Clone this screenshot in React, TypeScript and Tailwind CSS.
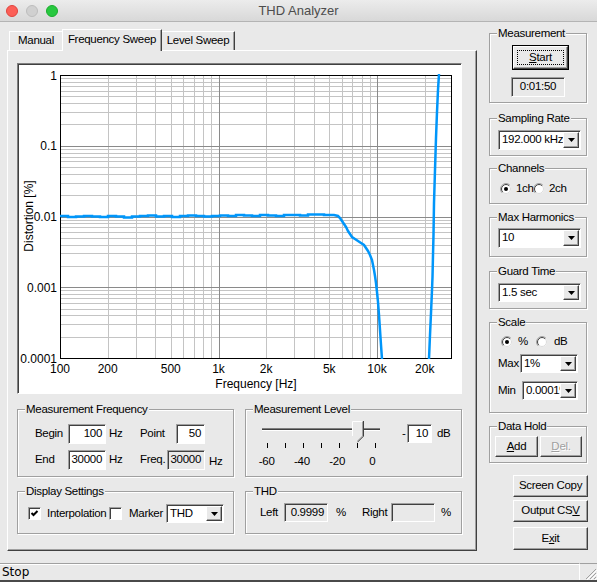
import React from "react";

const UI_FONT = '"Liberation Sans", Arial, sans-serif';
const CHART_FONT = '"Liberation Sans", Arial, sans-serif';

// plot area in page coordinates
const X0 = 60;
const X1 = 452;
const Y0 = 75;
const Y1 = 358;
const DX = 158.5;
const DY = (Y1 - Y0) / 4;
const fx = (f: number) => X0 + DX * Math.log10(f / 100);
const vy = (v: number) => Y0 - DY * Math.log10(v);

const FLAT_Y = [
  216, 217, 216.5, 216, 216.5, 217, 216, 216.5, 217.5, 216.5, 216, 215.5, 216.5, 216, 217, 216, 215.5,
  216, 216.5, 216, 215.5, 216, 215, 215.5, 216, 215, 215.5, 216, 215, 215, 215.5, 214.5, 214.5, 215,
];

const DROP: [number, number][] = [
  [334, 215], [338, 216], [340, 218], [342, 221], [344, 224], [346, 227], [348, 231], [350, 234],
  [352, 237], [355, 239], [358, 241], [361, 243], [364, 245], [366, 248], [368, 251], [370, 255],
  [372, 260], [373, 265], [374, 270], [375, 276], [376, 283], [377, 292], [378, 302], [379, 315],
  [380, 330], [381, 345], [382, 359],
];

const RISE: [number, number][] = [
  [429, 359], [430, 335], [431, 313], [432, 290], [432.5, 277], [433, 255], [433.5, 235], [434, 203],
  [435, 170], [436, 138], [437, 112], [438, 90], [439, 74],
];

function Chart() {
  const vlines: { x: number; major: boolean }[] = [];
  for (const d of [100, 1000, 10000]) {
    for (let k = 1; k <= 9; k++) {
      const f = k * d;
      if (f <= 100 || f >= 30000) continue;
      vlines.push({ x: Math.round(fx(f)) + 0.5, major: k === 1 });
    }
  }
  const hlines: { y: number; major: boolean }[] = [];
  for (const d of [0.0001, 0.001, 0.01, 0.1]) {
    for (let k = 1; k <= 9; k++) {
      const v = k * d;
      if (k === 1 && d === 0.0001) continue;
      hlines.push({ y: Math.round(vy(v)) + 0.5, major: k === 1 });
    }
  }

  const flat: string[] = [];
  FLAT_Y.forEach((y, i) => {
    const x = X0 + i * 8;
    flat.push(`${x},${y}`, `${x + 8},${y}`);
  });
  const curve1 = [...flat, ...DROP.map(([x, y]) => `${x},${y}`)].join(" ");
  const curve2 = RISE.map(([x, y]) => `${x},${y}`).join(" ");

  const xlabels: [number, string][] = [
    [100, "100"], [200, "200"], [500, "500"], [1000, "1k"], [2000, "2k"], [5000, "5k"], [10000, "10k"], [20000, "20k"],
  ];
  const ylabels: [number, string][] = [
    [1, "1"], [0.1, "0.1"], [0.01, "0.01"], [0.001, "0.001"], [0.0001, "0.0001"],
  ];

  return (
    <svg width="443" height="329" viewBox="18 64 443 329" style={{ fontFamily: CHART_FONT, letterSpacing: 0 }}>
      <defs>
        <clipPath id="plot">
          <rect x={X0} y={Y0 - 1} width={X1 - X0} height={Y1 - Y0 + 2} />
        </clipPath>
      </defs>
      <g shapeRendering="crispEdges">
        {vlines.filter((l) => !l.major).map((l) => (
          <line key={`v${l.x}`} x1={l.x} x2={l.x} y1={Y0} y2={Y1} stroke="#c4c4c4" />
        ))}
        {hlines.filter((l) => !l.major).map((l) => (
          <line key={`h${l.y}`} x1={X0} x2={X1} y1={l.y} y2={l.y} stroke="#c4c4c4" />
        ))}
        {vlines.filter((l) => l.major).map((l) => (
          <line key={`V${l.x}`} x1={l.x} x2={l.x} y1={Y0} y2={Y1} stroke="#8a8a8a" />
        ))}
        {hlines.filter((l) => l.major).map((l) => (
          <line key={`H${l.y}`} x1={X0} x2={X1} y1={l.y} y2={l.y} stroke="#8a8a8a" />
        ))}
        <rect x={X0 + 0.5} y={Y0 + 0.5} width={X1 - X0 - 1} height={Y1 - Y0} fill="none" stroke="#000" />
      </g>
      <g clipPath="url(#plot)" fill="none" stroke="#0096fa" strokeWidth="2.5" strokeLinejoin="miter">
        <polyline points={curve1} />
        <polyline points={curve2} />
      </g>
      {ylabels.map(([v, t]) => (
        <text key={t} x={57} y={vy(v) + 4.5} fontSize="12" textAnchor="end" fill="#000">
          {t}
        </text>
      ))}
      {xlabels.map(([f, t]) => (
        <text key={t} x={fx(f)} y={373} fontSize="12" textAnchor="middle" fill="#000">
          {t}
        </text>
      ))}
      <text x={256} y={388} fontSize="12" textAnchor="middle" fill="#000">
        Frequency [Hz]
      </text>
      <text x={33} y={216} fontSize="12" textAnchor="middle" fill="#000" transform="rotate(-90 33 216)">
        Distortion [%]
      </text>
    </svg>
  );
}

function Group({ label, className, children }: { label: string; className: string; children?: React.ReactNode }) {
  return (
    <div className={`relative border border-[#a0a0a0] shadow-[inset_1px_1px_0_#fff,1px_1px_0_#fff] ${className}`}>
      <span className="absolute -top-[7px] left-[7px] bg-[#e9e9e9] px-[1px] leading-[13px] whitespace-nowrap">
        {label}
      </span>
      {children}
    </div>
  );
}

function Field({ value, className, disabled }: { value: string; className: string; disabled?: boolean }) {
  return (
    <div
      className={`flex items-center justify-end pr-[3px] border border-t-[#a0a0a0] border-l-[#a0a0a0] border-r-white border-b-white shadow-[inset_1px_1px_0_#404040] leading-none ${
        disabled ? "bg-[#e9e9e9]" : "bg-white"
      } ${className}`}
    >
      {value}
    </div>
  );
}

function Arrow() {
  return (
    <svg width="7" height="4" viewBox="0 0 7 4">
      <path d="M0 0 H7 L3.5 4 Z" fill="#000" />
    </svg>
  );
}

function Combo({ value, className }: { value: string; className: string }) {
  return (
    <div
      className={`flex items-stretch p-[1px] bg-white border border-t-[#a0a0a0] border-l-[#a0a0a0] border-r-white border-b-white shadow-[inset_1px_1px_0_#404040] ${className}`}
    >
      <span className="flex-1 min-w-0 overflow-hidden flex items-center pl-[2px] leading-none">{value}</span>
      <span className="w-[16px] shrink-0 flex items-center justify-center bg-[#e9e9e9] border border-t-white border-l-white border-r-[#404040] border-b-[#404040] shadow-[inset_-1px_-1px_0_#a0a0a0]">
        <Arrow />
      </span>
    </div>
  );
}

function Btn({ children, className }: { children: React.ReactNode; className: string }) {
  return (
    <div
      className={`flex items-center justify-center bg-[#e9e9e9] border border-t-white border-l-white border-r-[#404040] border-b-[#404040] shadow-[inset_-1px_-1px_0_#a0a0a0] leading-none ${className}`}
    >
      {children}
    </div>
  );
}

function Check({ checked }: { checked?: boolean }) {
  return (
    <div className="w-[13px] h-[13px] shrink-0 bg-white border border-t-[#a0a0a0] border-l-[#a0a0a0] border-r-white border-b-white shadow-[inset_1px_1px_0_#404040] flex items-center justify-center">
      {checked && (
        <svg width="9" height="9" viewBox="0 0 9 9">
          <path d="M1.5 4 L3.5 6 L7.5 2" stroke="#000" strokeWidth="2" fill="none" />
        </svg>
      )}
    </div>
  );
}

function Radio({ checked }: { checked?: boolean }) {
  const a = (r: number) => 6 - r * 0.7071;
  const b = (r: number) => 6 + r * 0.7071;
  return (
    <svg width="12" height="12" viewBox="0 0 12 12" className="shrink-0">
      <circle cx="6" cy="6" r="5" fill="#fff" />
      <path d={`M${a(5.5)} ${b(5.5)} A5.5 5.5 0 0 1 ${b(5.5)} ${a(5.5)}`} stroke="#a0a0a0" fill="none" />
      <path d={`M${a(4.5)} ${b(4.5)} A4.5 4.5 0 0 1 ${b(4.5)} ${a(4.5)}`} stroke="#404040" fill="none" />
      <path d={`M${b(4.5)} ${a(4.5)} A4.5 4.5 0 0 1 ${a(4.5)} ${b(4.5)}`} stroke="#dcdcdc" fill="none" />
      {checked && <circle cx="6" cy="6" r="2" fill="#000" />}
    </svg>
  );
}

function Slider() {
  const ticks = [11.3, 29.3, 47.3, 65.3, 83.3, 101.3, 119.3];
  return (
    <svg width="134" height="34" viewBox="0 0 134 34" shapeRendering="crispEdges">
      <line x1="6" x2="124" y1="10.5" y2="10.5" stroke="#808080" />
      <line x1="6" x2="124" y1="11.5" y2="11.5" stroke="#404040" />
      <line x1="6" x2="124" y1="12.5" y2="12.5" stroke="#fff" />
      {ticks.map((x) => (
        <line key={x} x1={Math.round(x) + 0.5} x2={Math.round(x) + 0.5} y1="25" y2="30" stroke="#000" />
      ))}
      <g shapeRendering="auto">
        <path d="M96 3 H107 V18 L101.5 23.5 L96 18 Z" fill="#e9e9e9" />
        <path d="M96.5 18 V3.5 H107" stroke="#fff" fill="none" />
        <path d="M106.5 3.5 V18 L101.5 23" stroke="#a0a0a0" fill="none" />
        <path d="M107.5 3 V18.2 L101.5 24.2" stroke="#404040" fill="none" />
      </g>
    </svg>
  );
}

export default function App() {
  return (
    <div
      className="w-[597px] h-[582px] flex flex-col overflow-hidden bg-[#e9e9e9] text-[11.5px] tracking-[-0.3px] text-black whitespace-nowrap"
      style={{ fontFamily: UI_FONT }}
    >
      {/* title bar */}
      <div className="h-[22px] shrink-0 flex items-center bg-gradient-to-b from-[#ececec] to-[#d8d8d8] border-b border-[#b4b4b4]">
        <div className="w-[64px] flex items-center gap-[8px] pl-[6px]">
          <span className="w-[12px] h-[12px] rounded-full bg-[#fc5f57] border border-[#e0443e]" />
          <span className="w-[12px] h-[12px] rounded-full bg-[#d0d0d0] border border-[#bdbdbd]" />
          <span className="w-[12px] h-[12px] rounded-full bg-[#28c840] border border-[#1aad2c]" />
        </div>
        <div className="flex-1 text-center text-[13px] tracking-normal text-[#4d4d4d] leading-none">THD Analyzer</div>
        <div className="w-[64px]" />
      </div>

      {/* body */}
      <div className="h-[541px] shrink-0 flex">
        {/* left: tabs */}
        <div className="w-[480px] pl-[7px] flex flex-col">
          <div className="h-[21px] mt-[7px] pl-[2px] flex items-end">
            <div className="w-[53px] h-[19px] border-t border-l border-white flex items-center justify-center leading-none">
              Manual
            </div>
            <div className="relative z-10 w-[100px] h-[22px] -mb-[1px] bg-[#e9e9e9] border-t border-l border-white border-r border-r-[#404040] shadow-[inset_-1px_0_0_#a0a0a0] flex items-center justify-center pb-[2px] leading-none">
              Frequency Sweep
            </div>
            <div className="w-[73px] h-[19px] border-t border-white border-r border-r-[#404040] shadow-[inset_-1px_0_0_#a0a0a0] flex items-center justify-center leading-none">
              Level Sweep
            </div>
          </div>

          <div className="w-[470px] h-[501px] border border-t-white border-l-white border-r-[#404040] border-b-[#404040] shadow-[inset_-1px_-1px_0_#a0a0a0] pl-[9px] pt-[12px] flex flex-col">
            <div className="w-[445px] h-[331px] bg-white border border-t-[#808080] border-l-[#808080] border-r-white border-b-white shadow-[inset_1px_1px_0_#404040]">
              <Chart />
            </div>

            <div className="flex gap-[11px] mt-[15px]">
              <Group label="Measurement Frequency" className="w-[217px] h-[68px] pl-[17px] pt-[14px]">
                <div className="flex items-center h-[20px]">
                  <span className="w-[33px]">Begin</span>
                  <Field value="100" className="w-[38px] h-[20px]" />
                  <span className="w-[31px] ml-[3px]">Hz</span>
                  <span className="w-[36px]">Point</span>
                  <Field value="50" className="w-[29px] h-[20px]" />
                </div>
                <div className="flex items-center h-[20px] mt-[6px]">
                  <span className="w-[33px]">End</span>
                  <Field value="30000" className="w-[38px] h-[20px]" />
                  <span className="w-[31px] ml-[3px]">Hz</span>
                  <span className="w-[27px]">Freq.</span>
                  <Field value="30000" className="w-[38px] h-[20px]" disabled />
                  <span className="ml-[4px] mt-[3px]">Hz</span>
                </div>
              </Group>

              <Group label="Measurement Level" className="w-[217px] h-[68px] pl-[10px] pt-[8px] flex">
                <div className="w-[134px] flex flex-col">
                  <Slider />
                  <div className="flex -ml-[7px] mt-[2px] leading-[14px]">
                    <span className="w-[36px] text-center">-60</span>
                    <span className="w-[36px] text-center">-40</span>
                    <span className="w-[36px] text-center">-20</span>
                    <span className="w-[36px] text-center">0</span>
                  </div>
                </div>
                <div className="flex items-center self-start mt-[6px] ml-[12px]">
                  <span className="w-[5px]">-</span>
                  <Field value="10" className="w-[25px] h-[19px]" />
                  <span className="ml-[5px]">dB</span>
                </div>
              </Group>
            </div>

            <div className="flex gap-[11px] mt-[14px]">
              <Group label="Display Settings" className="w-[217px] h-[43px] pl-[10px] pt-[12px]">
                <div className="flex items-center h-[19px]">
                  <Check checked />
                  <span className="ml-[6px] w-[62px]">Interpolation</span>
                  <Check />
                  <span className="ml-[7px] w-[37px]">Marker</span>
                  <Combo value="THD" className="w-[58px] h-[19px]" />
                </div>
              </Group>

              <Group label="THD" className="w-[217px] h-[43px] pl-[14px] pt-[11px]">
                <div className="flex items-center h-[19px]">
                  <span className="w-[24px]">Left</span>
                  <Field value="0.9999" className="w-[44px] h-[19px]" disabled />
                  <span className="ml-[8px] w-[26px]">%</span>
                  <span className="w-[29px]">Right</span>
                  <Field value="" className="w-[44px] h-[19px]" disabled />
                  <span className="ml-[6px]">%</span>
                </div>
              </Group>
            </div>
          </div>
        </div>

        {/* right column */}
        <div className="w-[117px] pl-[9px] flex flex-col">
          <Group label="Measurement" className="w-[98px] h-[70px] mt-[11px] pl-[22px] pt-[11px]">
            <div className="w-[57px] h-[25px] border border-black">
              <Btn className="w-full h-full p-[3px]">
                <span className="w-full h-full flex items-center justify-center border border-dotted border-black leading-none">
                  <span>
                    <span className="underline">S</span>tart
                  </span>
                </span>
              </Btn>
            </div>
            <div className="-ml-[1px] mt-[7px] w-[54px] h-[20px] flex items-center justify-center border border-t-[#a0a0a0] border-l-[#a0a0a0] border-r-white border-b-white shadow-[inset_1px_1px_0_#404040] leading-none">
              0:01:50
            </div>
          </Group>

          <Group label="Sampling Rate" className="w-[98px] h-[38px] mt-[15px] pl-[8px] pt-[11px]">
            <Combo value="192.000 kHz" className="w-[83px] h-[20px]" />
          </Group>

          <Group label="Channels" className="w-[98px] h-[36px] mt-[12px] pl-[10px] pt-[14px]">
            <div className="flex items-center h-[12px]">
              <Radio checked />
              <span className="ml-[4px] w-[17px]">1ch</span>
              <Radio />
              <span className="ml-[4px]">2ch</span>
            </div>
          </Group>

          <Group label="Max Harmonics" className="w-[98px] h-[40px] mt-[13px] pl-[8px] pt-[10px]">
            <Combo value="10" className="w-[83px] h-[20px]" />
          </Group>

          <Group label="Guard Time" className="w-[98px] h-[38px] mt-[14px] pl-[8px] pt-[11px]">
            <Combo value="1.5 sec" className="w-[83px] h-[19px]" />
          </Group>

          <Group label="Scale" className="w-[98px] h-[91px] mt-[13px] pl-[8px] pt-[13px]">
            <div className="flex items-center h-[12px] pl-[3px]">
              <Radio checked />
              <span className="ml-[5px] w-[18px]">%</span>
              <Radio />
              <span className="ml-[6px]">dB</span>
            </div>
            <div className="flex items-center mt-[6px]">
              <span className="w-[22px]">Max</span>
              <Combo value="1%" className="w-[58px] h-[19px]" />
            </div>
            <div className="flex items-center mt-[8px]">
              <span className="w-[24px]">Min</span>
              <Combo value="0.0001%" className="w-[56px] h-[19px]" />
            </div>
          </Group>

          <Group label="Data Hold" className="w-[98px] h-[37px] mt-[13px] pl-[5px] pt-[9px]">
            <div className="flex gap-[2px]">
              <Btn className="w-[43px] h-[21px]">
                <span>
                  <span className="underline">A</span>dd
                </span>
              </Btn>
              <Btn className="w-[42px] h-[21px] text-[#a0a0a0]">
                <span style={{ textShadow: "1px 1px 0 #fff" }}>
                  <span className="underline">D</span>el.
                </span>
              </Btn>
            </div>
          </Group>

          <Btn className="w-[75px] h-[22px] mt-[12px] ml-[24px]">Screen Copy</Btn>
          <Btn className="w-[75px] h-[22px] mt-[3px] ml-[24px]">
            <span>
              Output CS<span className="underline">V</span>
            </span>
          </Btn>
          <Btn className="w-[75px] h-[23px] mt-[5px] ml-[24px]">
            <span>
              E<span className="underline">x</span>it
            </span>
          </Btn>
        </div>
      </div>

      {/* status bar */}
      <div className="h-[19px] shrink-0 flex border-b-2 border-[#4a4a4a]">
        <div
          className="w-[580px] h-[17px] border-t border-t-[#a0a0a0] border-r border-r-white shadow-[inset_0_1px_0_#fff] flex items-center pl-[2px] leading-none text-[12px] tracking-normal"
          style={{ fontFamily: '"DejaVu Sans", sans-serif' }}
        >
          Stop
        </div>
        <div className="flex-1 flex items-end justify-end border-t border-t-[#a0a0a0]">
          <svg width="12" height="12" viewBox="0 0 12 12">
            <path d="M11 1 L1 11 M11 5 L5 11 M11 9 L9 11" stroke="#a0a0a0" strokeWidth="1" />
            <path d="M12 2 L2 12 M12 6 L6 12 M12 10 L10 12" stroke="#fff" strokeWidth="1" />
          </svg>
        </div>
      </div>
    </div>
  );
}
